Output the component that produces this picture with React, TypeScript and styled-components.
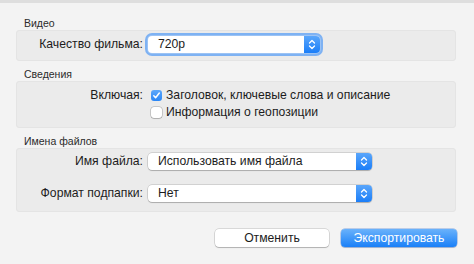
import styled, { createGlobalStyle } from 'styled-components'

const GlobalStyle = createGlobalStyle`
  html, body {
    margin: 0;
    padding: 0;
    background: #f3f3f3;
  }
  body {
    font-family: "Liberation Sans", Arial, sans-serif;
  }
`

const Window = styled.div`
  width: 474px;
  height: 264px;
  box-sizing: border-box;
  background: #f3f3f3;
  border-top: 3px solid #dedede;
  padding: 0 18px 0 16px;
  display: flex;
  flex-direction: column;
  color: #1c1c1c;
`

const SectionLabel = styled.div<{ $top: number }>`
  margin-top: ${({ $top }) => $top}px;
  padding-left: 8px;
  font-size: 10.5px;
  line-height: 13px;
  height: 13px;
  color: #2b2b2b;
`

const Box = styled.div<{ $pad: string; $gap?: number }>`
  box-sizing: border-box;
  width: 440px;
  background: #ebebeb;
  border: 1px solid #e4e4e4;
  border-radius: 3px;
  padding: ${({ $pad }) => $pad};
  display: flex;
  flex-direction: column;
  gap: ${({ $gap }) => $gap ?? 0}px;
`

const Row = styled.div<{ $h: number }>`
  display: grid;
  grid-template-columns: 126px 1fr;
  column-gap: 5px;
  align-items: center;
  height: ${({ $h }) => $h}px;
`

const Label = styled.div`
  text-align: right;
  font-size: 12.2px;
  line-height: 15px;
  white-space: nowrap;
`

const Popup = styled.div<{ $w: number; $focus?: boolean }>`
  position: relative;
  box-sizing: border-box;
  width: ${({ $w }) => $w}px;
  height: 17px;
  background: #fff;
  border-radius: 4px;
  box-shadow: ${({ $focus }) =>
    $focus
      ? '0 0 0 1px #9cc3f4, 0 0 0 3px #7eb2f3'
      : '0 0 0 0.5px rgba(0,0,0,0.22), 0 1px 1px rgba(0,0,0,0.18)'};
  display: flex;
  align-items: center;
  padding-left: 10px;
  font-size: 12.2px;
  line-height: 15px;
`

const Stepper = styled.div`
  position: absolute;
  right: 0;
  top: 0;
  bottom: 0;
  width: 16px;
  border-radius: 0 4px 4px 0;
  background: linear-gradient(#5aa6fb, #1b7ef8);
  display: flex;
  align-items: center;
  justify-content: center;
`

const CheckRow = styled.div`
  display: flex;
  align-items: center;
  gap: 4px;
  margin-left: 3px;
  font-size: 12.2px;
  line-height: 15px;
  white-space: nowrap;
`

const Check = styled.div<{ $on?: boolean }>`
  box-sizing: border-box;
  width: 11px;
  height: 11px;
  border-radius: 3px;
  background: ${({ $on }) => ($on ? 'linear-gradient(#5ea8fa, #2a86f6)' : '#fff')};
  box-shadow: ${({ $on }) =>
    $on ? 'none' : '0 0 0 0.5px rgba(0,0,0,0.3), 0 1px 1px rgba(0,0,0,0.12)'};
  display: flex;
  align-items: center;
  justify-content: center;
`

const Footer = styled.div`
  margin-top: 17px;
  display: flex;
  justify-content: flex-end;
  gap: 12px;
  margin-right: -1px;
`

const Button = styled.div<{ $primary?: boolean }>`
  box-sizing: border-box;
  width: ${({ $primary }) => ($primary ? 116 : 114)}px;
  height: 18px;
  border-radius: 4px;
  display: flex;
  align-items: center;
  justify-content: center;
  font-size: 12.2px;
  color: ${({ $primary }) => ($primary ? '#fff' : '#1c1c1c')};
  background: ${({ $primary }) => ($primary ? 'linear-gradient(#6ab2fb, #1a80f8)' : '#fff')};
  box-shadow: ${({ $primary }) =>
    $primary
      ? '0 0 0 0.5px rgba(20,90,200,0.5), 0 1px 1px rgba(0,0,0,0.15)'
      : '0 0 0 0.5px rgba(0,0,0,0.22), 0 1px 1px rgba(0,0,0,0.18)'};
`

function Arrows() {
  return (
    <svg width="8" height="11" viewBox="0 0 8 11">
      <path d="M1.5 4 L4 1.5 L6.5 4 M1.5 7 L4 9.5 L6.5 7" fill="none" stroke="#fff" strokeWidth="1.3" strokeLinecap="round" strokeLinejoin="round" />
    </svg>
  )
}

function Tick() {
  return (
    <svg width="9" height="9" viewBox="0 0 9 9">
      <path d="M1.8 4.8 L3.6 6.7 L7.3 2" fill="none" stroke="#fff" strokeWidth="1.5" strokeLinecap="round" strokeLinejoin="round" />
    </svg>
  )
}

export default function App() {
  return (
    <>
      <GlobalStyle />
      <Window>
        <SectionLabel $top={14}>Видео</SectionLabel>
        <Box $pad="4px 0 6px">
          <Row $h={19}>
            <Label>Качество фильма:</Label>
            <Popup $w={172} $focus>
              720p
              <Stepper>
                <Arrows />
              </Stepper>
            </Popup>
          </Row>
        </Box>

        <SectionLabel $top={7}>Сведения</SectionLabel>
        <Box $pad="5px 0 6px">
          <Row $h={17}>
            <Label>Включая:</Label>
            <CheckRow>
              <Check $on>
                <Tick />
              </Check>
              Заголовок, ключевые слова и описание
            </CheckRow>
          </Row>
          <Row $h={17}>
            <div />
            <CheckRow>
              <Check />
              Информация о геопозиции
            </CheckRow>
          </Row>
        </Box>

        <SectionLabel $top={7}>Имена файлов</SectionLabel>
        <Box $pad="4px 0 9px" $gap={15}>
          <Row $h={17}>
            <Label>Имя файла:</Label>
            <Popup $w={224}>
              Использовать имя файла
              <Stepper>
                <Arrows />
              </Stepper>
            </Popup>
          </Row>
          <Row $h={17}>
            <Label>Формат подпапки:</Label>
            <Popup $w={224}>
              Нет
              <Stepper>
                <Arrows />
              </Stepper>
            </Popup>
          </Row>
        </Box>

        <Footer>
          <Button>Отменить</Button>
          <Button $primary>Экспортировать</Button>
        </Footer>
      </Window>
    </>
  )
}
